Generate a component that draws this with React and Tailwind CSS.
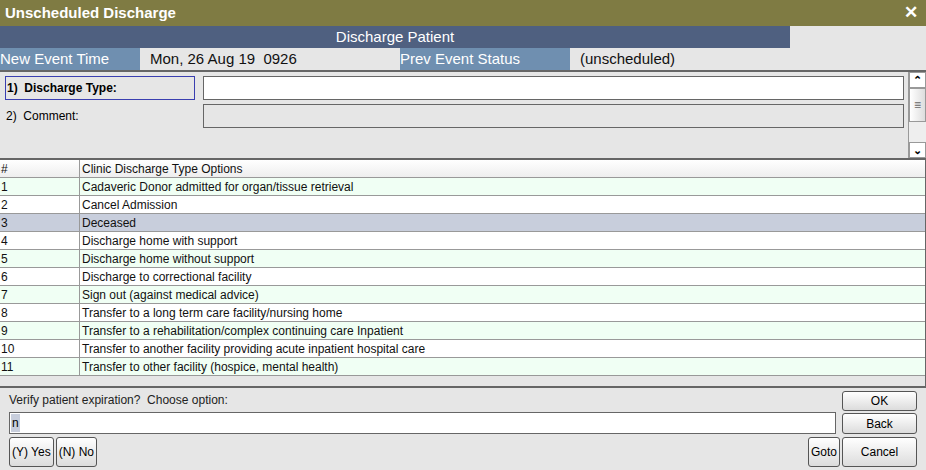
const rows = [
  "Cadaveric Donor admitted for organ/tissue retrieval",
  "Cancel Admission",
  "Deceased",
  "Discharge home with support",
  "Discharge home without support",
  "Discharge to correctional facility",
  "Sign out (against medical advice)",
  "Transfer to a long term care facility/nursing home",
  "Transfer to a rehabilitation/complex continuing care Inpatient",
  "Transfer to another facility providing acute inpatient hospital care",
  "Transfer to other facility (hospice, mental health)",
];

const Btn = ({ children, className = "" }) => (
  <button className={`border border-[#555] rounded-[3px] bg-gradient-to-b from-white to-[#dcdcdc] text-[12px] text-black ${className}`}>
    {children}
  </button>
);

export default function App() {
  return (
    <div className="w-[926px] h-[470px] bg-[#e6e6e6] flex flex-col overflow-hidden" style={{ fontFamily: "Arial, 'Liberation Sans', sans-serif" }}>
      {/* title */}
      <div className="h-[26px] bg-[#7f7b43] flex items-center justify-between px-[5px] text-white">
        <span className="font-bold text-[15px]">Unscheduled Discharge</span>
        <span className="font-bold text-[17px] pr-[3px]">✕</span>
      </div>
      <div className="h-[22px] flex">
        <div className="w-[790px] bg-[#4f6080] text-white text-[15px] flex items-center justify-center">Discharge Patient</div>
      </div>
      <div className="h-[22px] flex text-[15px] items-stretch">
        <div className="w-[140px] bg-[#6f8fb0] text-white flex items-center">New Event Time</div>
        <div className="w-[260px] flex items-center pl-[10px] text-[#111]">Mon, 26 Aug 19&nbsp; 0926</div>
        <div className="w-[170px] bg-[#6f8fb0] text-white flex items-center">Prev Event Status</div>
        <div className="flex items-center pl-[10px] text-[#111]">(unscheduled)</div>
      </div>
      {/* form */}
      <div className="h-[88px] border-t-2 border-[#666] flex">
        <div className="flex-1 flex flex-col gap-[4px] pt-[4px] pl-[5px] pr-[4px] text-[12px]">
          <div className="flex h-[24px] gap-[8px]">
            <div className="w-[190px] border border-[#3a3fb0] flex items-center pl-[1px] font-bold">1)&nbsp; Discharge Type:</div>
            <div className="flex-1 border border-[#666] bg-white"></div>
          </div>
          <div className="flex h-[24px] gap-[8px]">
            <div className="w-[190px] flex items-center pl-[1px]">2)&nbsp; Comment:</div>
            <div className="flex-1 border border-[#666] bg-[#e6e6e6]"></div>
          </div>
        </div>
        <div className="w-[18px] flex flex-col border-l border-[#999] bg-[#eee]">
          <div className="h-[16px] border border-[#999] bg-white flex items-center justify-center text-[11px] font-bold">⌃</div>
          <div className="flex-1 border border-[#999] bg-gradient-to-r from-white to-[#ddd] flex items-center justify-center text-[#666] text-[12px] mb-[20px]">≡</div>
          <div className="h-[16px] border border-[#999] bg-white flex items-center justify-center text-[11px] font-bold">⌄</div>
        </div>
      </div>
      {/* table */}
      <div className="h-[230px] border-t-2 border-b-2 border-r border-[#666] flex flex-col text-[12px] text-[#111]">
        <div className="h-[18px] flex bg-gradient-to-b from-white to-[#eee] border-b border-[#999]">
          <div className="w-[80px] pl-[1px] border-r border-[#999] flex items-center">#</div>
          <div className="pl-[2px] flex items-center">Clinic Discharge Type Options</div>
        </div>
        {rows.map((r, i) => (
          <div key={i} className={`h-[18px] flex border-b border-[#999] ${i === 2 ? "bg-[#c8cedc]" : i % 2 === 0 ? "bg-[#f0fff4]" : "bg-white"}`}>
            <div className="w-[80px] pl-[1px] border-r border-[#999] flex items-center">{i + 1}</div>
            <div className="pl-[2px] flex items-center">{r}</div>
          </div>
        ))}
      </div>
      {/* bottom */}
      <div className="flex-1 flex px-[9px] pt-[3px] gap-[6px] text-[12px]">
        <div className="flex-1 flex flex-col">
          <div className="h-[18px] flex items-center text-[#222]">Verify patient expiration?&nbsp; Choose option:</div>
          <div className="h-[22px] mt-[3px] border border-[#666] bg-white flex items-center pl-[1px]">
            <span className="bg-[#c8cedc] px-[1px]">n</span>
          </div>
          <div className="flex mt-[3px] gap-[2px]">
            <Btn className="h-[30px] px-[2px]">(Y) Yes</Btn>
            <Btn className="h-[30px] px-[2px]">(N) No</Btn>
            <div className="flex-1"></div>
            <Btn className="h-[30px] px-[2px] mr-[-4px]">Goto</Btn>
          </div>
        </div>
        <div className="w-[75px] flex flex-col gap-[2px]">
          <Btn className="h-[20px]">OK</Btn>
          <Btn className="h-[21px]">Back</Btn>
          <Btn className="h-[30px] mt-[1px]">Cancel</Btn>
        </div>
      </div>
    </div>
  );
}
